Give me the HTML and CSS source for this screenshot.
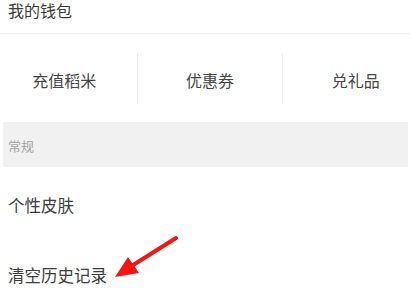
FILE: index.html
```html
<!DOCTYPE html>
<html lang="zh">
<head>
<meta charset="utf-8">
<link rel="stylesheet" href="styles.css">
</head>
<body>
<div class="page">
  <div class="wallet-title">我的钱包</div>
  <div class="tabs">
    <div class="tab">充值稻米</div>
    <div class="sep"></div>
    <div class="tab">优惠券</div>
    <div class="sep"></div>
    <div class="tab">兑礼品</div>
  </div>
  <div class="section-head">常规</div>
  <div class="list">
    <div class="item">个性皮肤</div>
    <div class="item">清空历史记录</div>
  </div>
  <svg class="arrow" width="410" height="293" viewBox="0 0 410 293">
    <line x1="176" y1="238" x2="130" y2="267" stroke="#f21616" stroke-width="4" stroke-linecap="round"/>
    <polygon points="115,277 128,257 139,273" fill="#f21616"/>
  </svg>
</div>
</body>
</html>
```
FILE: styles.css
```css
html, body {
  margin: 0;
  padding: 0;
  background: #ffffff;
}
body {
  font-family: "Noto Sans CJK SC", "Noto Sans", sans-serif;
  color: #3d3d3d;
  overflow: hidden;
}
.page {
  position: relative;
  width: 410px;
  height: 293px;
  overflow: hidden;
}
.wallet-title {
  height: 33px;
  line-height: 20px;
  font-size: 16px;
  padding-left: 8px;
  border-bottom: 1px solid #efefef;
  box-sizing: content-box;
}
.tabs {
  display: flex;
  align-items: center;
  height: 88px;
  margin-left: -8px;
  width: 436px;
}
.tab {
  flex: 1;
  text-align: center;
  font-size: 16px;
  color: #464646;
  line-height: 22px;
  padding-top: 4px;
}
.sep {
  width: 1px;
  height: 51px;
  background: #ececec;
}
.section-head {
  margin: 0 2px 0 3px;
  height: 45px;
  background: #f1f1f1;
  color: #a2a2a2;
  font-size: 13px;
  line-height: 20px;
  padding: 14px 0 0 5px;
  box-sizing: border-box;
}
.list {
  padding-top: 3px;
}
.item {
  height: 70px;
  display: flex;
  align-items: center;
  padding-left: 8px;
  font-size: 16.5px;
  color: #3d3d3d;
}
.arrow {
  position: absolute;
  left: 0;
  top: 0;
}
```
